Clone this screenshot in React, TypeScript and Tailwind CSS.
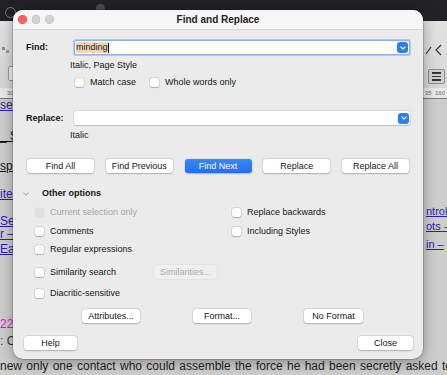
import React from 'react';

function Check({ label, disabled = false }: { label: string; disabled?: boolean }) {
  return (
    <div className="flex items-center h-[13px]">
      <span
        className={
          disabled
            ? 'w-[9px] h-[9px] rounded-[2px] bg-[#dfdfdf] shadow-[0_0_0_0.5px_rgba(0,0,0,0.05)]'
            : 'w-[9px] h-[9px] rounded-[2px] bg-white shadow-[0_0_0_0.5px_rgba(0,0,0,0.16),0_0.5px_1px_rgba(0,0,0,0.2)]'
        }
      />
      <span className={disabled ? 'ml-[6px] text-[#a4a4a4]' : 'ml-[6px] text-[#151515]'}>{label}</span>
    </div>
  );
}

function Btn({
  label,
  kind = 'normal',
  className = '',
}: {
  label: string;
  kind?: 'normal' | 'primary' | 'disabled';
  className?: string;
}) {
  const look =
    kind === 'primary'
      ? 'bg-[linear-gradient(#3a88f8,#1e70f5)] text-white shadow-[0_0.5px_1.5px_rgba(0,0,0,0.25)]'
      : kind === 'disabled'
      ? 'bg-[#efefef] text-[#a9a9a9] shadow-[0_0_0_0.5px_rgba(0,0,0,0.07)]'
      : 'bg-white text-[#151515] shadow-[0_0_0_0.5px_rgba(0,0,0,0.1),0_0.5px_1.5px_rgba(0,0,0,0.22)]';
  return (
    <div className={`h-[14px] rounded-[3px] flex items-center justify-center ${look} ${className}`}>{label}</div>
  );
}

function Dropdown() {
  return (
    <span className="ml-auto mr-[1px] w-[11px] h-[11px] rounded-[3px] bg-[#2b7ef6] flex items-center justify-center">
      <svg width="6" height="4" viewBox="0 0 6 4">
        <path d="M0.8 0.8 L3 3 L5.2 0.8" stroke="white" strokeWidth="1.1" fill="none" strokeLinecap="round" strokeLinejoin="round" />
      </svg>
    </span>
  );
}

function Dialog() {
  return (
    <div className="absolute left-[13px] top-[10px] w-[410px] h-[349px] rounded-[10px] bg-[#ebebeb] overflow-hidden shadow-[0_0_0_0.5px_rgba(0,0,0,0.3),0_3px_14px_rgba(0,0,0,0.35)] text-[9px] leading-[11px] text-[#151515] flex flex-col">
      {/* title bar */}
      <div className="h-[20px] shrink-0 bg-[#f6f6f6] border-b border-[#d5d5d5] grid grid-cols-[1fr_auto_1fr] items-center px-[5px]">
        <div className="flex gap-[5px]">
          <span className="w-[8.5px] h-[8.5px] rounded-full bg-[#fe5f57] shadow-[inset_0_0_0_0.5px_rgba(0,0,0,0.15)]" />
          <span className="w-[8.5px] h-[8.5px] rounded-full bg-[#d2d2d2] shadow-[inset_0_0_0_0.5px_rgba(0,0,0,0.1)]" />
          <span className="w-[8.5px] h-[8.5px] rounded-full bg-[#d2d2d2] shadow-[inset_0_0_0_0.5px_rgba(0,0,0,0.1)]" />
        </div>
        <div className="font-bold text-[10px] text-[#222]">Find and Replace</div>
        <div />
      </div>

      <div className="flex flex-col pt-[10px] px-[13px]">
        {/* find */}
        <div className="flex items-center h-[15px]">
          <span className="w-[48px] font-bold">Find:</span>
          <div className="flex-1 h-[15px] bg-white rounded-[2px] border border-[#86b4ef] shadow-[0_0_0_1px_rgba(120,170,240,0.5)] flex items-center">
            <span className="ml-[1px] bg-[#f6d6b1]">minding</span>
            <span className="w-[1px] h-[10px] bg-black" />
            <Dropdown />
          </div>
        </div>
        <div className="mt-[5px] ml-[44px]">Italic, Page Style</div>
        <div className="mt-[5px] ml-[49px] flex">
          <div className="w-[75px]">
            <Check label="Match case" />
          </div>
          <Check label="Whole words only" />
        </div>

        {/* replace */}
        <div className="mt-[22px] flex items-center h-[14px]">
          <span className="w-[48px] font-bold">Replace:</span>
          <div className="flex-1 h-[14px] bg-white rounded-[2px] shadow-[0_0_0_0.5px_rgba(0,0,0,0.12),0_0.5px_1px_rgba(0,0,0,0.15)] flex items-center">
            <Dropdown />
          </div>
        </div>
        <div className="mt-[5px] ml-[44px]">Italic</div>

        <div className="mt-[18px] ml-[1px] w-[382px] flex justify-between">
          <Btn label="Find All" className="w-[67px]" />
          <Btn label="Find Previous" className="w-[67px]" />
          <Btn label="Find Next" kind="primary" className="w-[67px]" />
          <Btn label="Replace" className="w-[67px]" />
          <Btn label="Replace All" className="w-[67px]" />
        </div>

        {/* other options */}
        <div className="mt-[15px] flex items-center">
          <svg width="6" height="4" viewBox="0 0 6 4" className="ml-[-3px]">
            <path d="M0.5 0.8 L3 3.2 L5.5 0.8" stroke="#8e8e8e" strokeWidth="0.9" fill="none" />
          </svg>
          <span className="ml-[13px] font-bold">Other options</span>
        </div>

        <div className="mt-[7px] ml-[9px] grid grid-cols-[197px_1fr] gap-y-[6px]">
          <Check disabled label="Current selection only" />
          <Check label="Replace backwards" />
          <Check label="Comments" />
          <Check label="Including Styles" />
        </div>
        <div className="mt-[5px] ml-[9px]">
          <Check label="Regular expressions" />
        </div>
        <div className="mt-[9px] ml-[9px] flex items-center">
          <div className="w-[119px]">
            <Check label="Similarity search" />
          </div>
          <Btn label="Similarities..." kind="disabled" className="w-[63px] h-[13px]" />
        </div>
        <div className="mt-[8px] ml-[9px]">
          <Check label="Diacritic-sensitive" />
        </div>

        <div className="mt-[9px] ml-[56px] flex gap-[53px]">
          <Btn label="Attributes..." className="w-[58px]" />
          <Btn label="Format..." className="w-[58px]" />
          <Btn label="No Format" className="w-[59px]" />
        </div>

        <div className="mt-[13px] -ml-[2px] -mr-[3px] flex justify-between">
          <Btn label="Help" className="w-[53px]" />
          <Btn label="Close" className="w-[55px]" />
        </div>
      </div>
    </div>
  );
}

export default function App() {
  return (
    <div className="relative w-[447px] h-[375px] overflow-hidden bg-[#cdcdcd] font-['Liberation_Sans',Arial,sans-serif]">
      <div className="flex flex-col h-full">
        {/* top dark bar */}
        <div className="h-[21px] shrink-0 bg-[#222226] flex items-start">
          <span className="ml-[5px] mt-[7px] w-[11px] h-[11px] rounded-full border-[1.5px] border-[#7a7a7e]" />
          <span className="ml-[80px] mt-[4px] w-[9px] h-[9px] rounded-full bg-[#4a4a50]" />
        </div>

        {/* toolbar */}
        <div className="h-[67px] shrink-0 bg-[linear-gradient(#e2e2e2,#d6d6d6)] flex justify-between">
          <div className="flex flex-col">
            <div className="mt-[26px] ml-[2px] flex gap-[1px]">
              <span className="w-[3px] h-[3px] bg-[#8a8a8a]" />
              <span className="w-[3px] h-[3px] mt-[3px] bg-[#9a9a9a]" />
            </div>
            <div className="mt-[13px] ml-[8px] w-[10px] h-[15px] rounded-[2px] bg-[#f2f2f2] border border-[#9a9a9a]" />
          </div>
          <div className="flex flex-col w-[22px]">
            <div className="mt-[23px] flex items-center gap-[3px]">
              <svg width="7" height="9" viewBox="0 0 7 9">
                <path d="M1 8 L6 1" stroke="#333" strokeWidth="1.2" />
              </svg>
              <svg width="10" height="12" viewBox="0 0 10 12">
                <path d="M6 1 L1 6 L6 11" stroke="#333" strokeWidth="1.2" fill="none" />
              </svg>
            </div>
            <div className="mt-[13px] ml-[3px] w-[17px] h-[15px] rounded-[2px] bg-[#cfcfcf] border border-[#8a8a8a] flex flex-col items-center justify-center gap-[2px]">
              <span className="w-[9px] h-[1.5px] bg-[#333]" />
              <span className="w-[9px] h-[1.5px] bg-[#333]" />
              <span className="w-[9px] h-[1.5px] bg-[#333]" />
            </div>
          </div>
        </div>

        {/* ruler */}
        <div className="h-[10px] shrink-0 bg-[#e8e8e8] text-[6px] leading-[10px] text-[#6e6e6e] flex justify-between">
          <span className="ml-[7px]">30</span>
          <span className="mr-[2px]">35&nbsp;&nbsp;160</span>
        </div>
        <div className="h-[1px] shrink-0 bg-[#7a7a7a]" />

        {/* document */}
        <div className="h-[260px] shrink-0 flex justify-between text-[12px] leading-[13px] whitespace-nowrap">
          <div className="flex flex-col">
            <span className="text-[#2323b4] underline">se</span>
            <span className="mt-[18px] text-[#111] underline">_ Sp</span>
            <span className="mt-[17px] text-[#111] underline">sp</span>
            <span className="mt-[15px] text-[#2323b4] underline">ite</span>
            <span className="mt-[14px] text-[#2323b4] underline">Ses</span>
            <span className="mt-[0px] text-[#2323b4] underline">r –</span>
            <span className="mt-[2px] text-[#2323b4] underline">Ea</span>
            <span className="mt-[62px] text-[#d41ad8]">22:</span>
            <span className="mt-[4px] text-[#333]">: C</span>
          </div>
          <div className="flex flex-col w-[21px] text-[11px]">
            <span className="mt-[106px] text-[#2323b4] underline">ntrol</span>
            <span className="mt-[2px] text-[#2323b4] underline">ots -</span>
            <span className="mt-[5px] text-[#2323b4] underline">in –</span>
          </div>
        </div>
        <div className="w-[452px] shrink-0 text-[12px] leading-[14px] text-[#1e1e1e] text-justify [text-align-last:justify]">
          new only one contact who could assemble the force he had been secretly asked to
        </div>
      </div>

      <Dialog />
    </div>
  );
}
